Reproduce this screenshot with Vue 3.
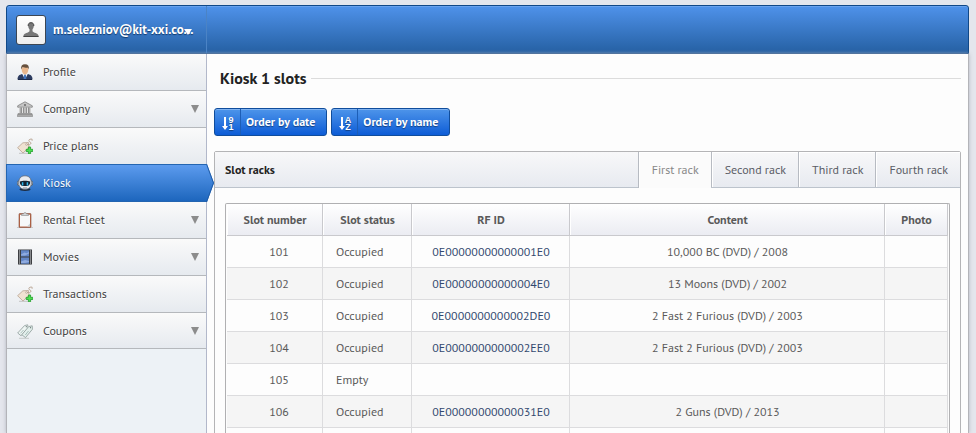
<script setup>
import { ref } from 'vue'

const menu = [
  { label: 'Profile', icon: 'person' },
  { label: 'Company', icon: 'bank', expandable: true },
  { label: 'Price plans', icon: 'tag' },
  { label: 'Kiosk', icon: 'robot', active: true },
  { label: 'Rental Fleet', icon: 'clipboard', expandable: true },
  { label: 'Movies', icon: 'film', expandable: true },
  { label: 'Transactions', icon: 'tag' },
  { label: 'Coupons', icon: 'coupons', expandable: true },
]

const orders = [
  { label: 'Order by date', top: '9', bottom: '1' },
  { label: 'Order by name', top: 'A', bottom: 'Z' },
]

const tabs = ['First rack', 'Second rack', 'Third rack', 'Fourth rack']
const current = ref(0)

const slots = [
  { number: '101', status: 'Occupied', rfid: '0E00000000000001E0', content: '10,000 BC (DVD) / 2008' },
  { number: '102', status: 'Occupied', rfid: '0E00000000000004E0', content: '13 Moons (DVD) / 2002' },
  { number: '103', status: 'Occupied', rfid: '0E0000000000002DE0', content: '2 Fast 2 Furious (DVD) / 2003' },
  { number: '104', status: 'Occupied', rfid: '0E0000000000002EE0', content: '2 Fast 2 Furious (DVD) / 2003' },
  { number: '105', status: 'Empty', rfid: '', content: '' },
  { number: '106', status: 'Occupied', rfid: '0E00000000000031E0', content: '2 Guns (DVD) / 2013' },
  { number: '', status: '', rfid: '', content: '' },
]
</script>

<template>
  <div class="page">
    <header class="topbar">
      <button class="user" type="button">
        <span class="avatar">
          <svg width="16" height="16" viewBox="0 0 16 16">
            <path d="M8 .5C6 .5 5 2 5.200 4c.1 1.500.7 2.600 1.300 3.300v2C5.500 10.800 1 11.300.5 13.500V15h15v-1.500c-.5-2.200-5-2.700-6-4.200v-2c.6-.7 1.200-1.800 1.300-3.300C11 2 10 .5 8 .5z" fill="#777" />
            <path d="M5.200 4C5 2 6 .7 8 .7s3 1.300 2.800 3.300M.5 14.500h15" fill="none" stroke="#444" />
          </svg>
        </span>
        <span class="email">m.selezniov@kit-xxi.co...</span>
        <svg class="user-caret" width="8" height="6" viewBox="0 0 8 6"><path d="M0 0h8L4 6z" fill="#fff" /></svg>
      </button>
    </header>

    <div class="body">
      <nav class="sidebar">
        <a v-for="item in menu" :key="item.label" href="#" class="item" :class="{ active: item.active }">
          <svg v-if="item.icon === 'person'" class="icon" viewBox="0 0 16 16">
            <path d="M.5 15.500c0-3.500 1.500-4.800 5-5.500h5c3.500.7 5 2 5 5.500z" fill="#2c3b60" />
            <path d="M5 9.500h6L8 15.500z" fill="#f2f5fa" />
            <path d="M7.200 10.500h1.600l.6 5H6.600z" fill="#3f73bd" />
            <path d="M4.600 4.500c0 4 1.800 6 3.400 6s3.400-2 3.400-6L9.500 2.800h-3z" fill="#e9b78d" />
            <path d="M4.200 5.500C3.700 2 5 .3 8 .3s4.300 1.700 3.800 5.200L11 3.700C9 4 7 3.300 5.800 3L5 4z" fill="#66503d" />
            <path d="M1 15.500h14" stroke="#1b2848" />
          </svg>
          <svg v-else-if="item.icon === 'bank'" class="icon" viewBox="0 0 16 16">
            <path d="M8 .8 15.300 4.800v1.400H.7V4.800z" fill="#c6c6c6" stroke="#808080" stroke-width=".8" />
            <circle cx="8" cy="4" r="1.100" fill="#6f6f6f" />
            <path d="M2 6.500h12v6H2z" fill="#868686" />
            <path d="M2.800 6.500v6M5.500 6.500v6M8 6.500v6M10.500 6.500v6M13.200 6.500v6" stroke="#e4e4e4" stroke-width="1.200" />
            <path d="M1 12.500h14v1.300H1zM.3 13.800h15.400v1.700H.3z" fill="#bfbfbf" stroke="#808080" stroke-width=".6" />
          </svg>
          <svg v-else-if="item.icon === 'tag'" class="icon" viewBox="0 0 16 16">
            <path d="M2 15.300h11" stroke="#c4c4c4" />
            <path d="M.6 9.700 5.900 4.800l5.500-.3.6 4.900-6 5.600z" fill="#f0e2d2" stroke="#b09a86" stroke-width=".7" />
            <circle cx="9.500" cy="6.500" r=".9" fill="#fff" stroke="#9b8374" stroke-width=".5" />
            <path d="M9.700 6.300c2 .9 4.300.2 4.300-1.200 0-1.200-2.300-1.100-2.200-2.400.1-1.500 2-1.900 3.300-1.500v1.600" fill="none" stroke="#b8a28f" stroke-width=".9" />
            <path d="M11.400 9h2.200v2.300h2.200v2.200h-2.200v2.300h-2.200v-2.300H9.200v-2.200h2.200z" fill="#4be04f" stroke="#1f9a2a" stroke-width=".8" />
          </svg>
          <svg v-else-if="item.icon === 'robot'" class="icon" viewBox="0 0 16 16">
            <ellipse cx="8" cy="14.500" rx="5.500" ry="1.400" fill="#1d2d42" />
            <rect x=".3" y="6" width="15.400" height="4.500" rx="1.500" fill="#c3c8d0" stroke="#43505f" stroke-width=".7" />
            <path d="M8 .8c4.300 0 6.300 2.800 6.300 7S12 14.300 8 14.300 1.700 12 1.700 7.800 3.700.8 8 .8z" fill="#e9ebef" stroke="#5d6673" stroke-width=".8" />
            <path d="M2.800 6.600C5 5.600 11 5.600 13.200 6.600c.1 2.800-1 4-2.700 4.400h-5C3.800 10.600 2.700 9.400 2.800 6.600z" fill="#152230" />
            <path d="M5.600 7.200v3.300M10.400 7.200v3.300" stroke="#2cb7ed" stroke-width="1.500" />
            <path d="M6 13h4" stroke="#818a96" />
          </svg>
          <svg v-else-if="item.icon === 'clipboard'" class="icon" viewBox="0 0 16 16">
            <path d="M0 15.500h16" stroke="#c7c8ca" />
            <rect x="2" y="1.500" width="12" height="14" rx=".8" fill="#b9694a" stroke="#8a4d38" stroke-width=".6" />
            <path d="M3 2.800h10v11.700H3z" fill="#f6f8f9" />
            <path d="m10 14.500 3-3v3z" fill="#c6d0d4" />
            <path d="M4.500 3.500V2h2C6.500.1 9.500.1 9.500 2h2v1.500z" fill="#d5d9db" stroke="#888" stroke-width=".6" />
          </svg>
          <svg v-else-if="item.icon === 'film'" class="icon" viewBox="0 0 16 16">
            <path d="M1 .5h14v15H1z" fill="#393b3e" />
            <path d="M4 1.200h8v6.300H4zM4 8.500h8v6.300H4z" fill="#6286c8" />
            <path d="M4 5.500 7.500 3.500l2 .8L12 3v1.500l-4 2H4zM4 12.500l4-1.500 4 1v1L8 14H4z" fill="#8fabdf" />
            <path d="M2.500 1.500v14M13.500 1.500v14" stroke="#d8dadc" stroke-width="1.100" stroke-dasharray="1 1" />
          </svg>
          <svg v-else class="icon" viewBox="0 0 16 16">
            <path d="M2 15.300h10" stroke="#c5cac9" />
            <path d="M.7 10 7.500 2.600l3.200-.8.4 3.200-7 7.800z" fill="#eef5f3" stroke="#8b9b98" stroke-width=".8" />
            <path d="M4.800 11.700 11.700 3.600l3.500-.8.200 3.500L8.500 14.600z" fill="#e3efec" stroke="#8b9b98" stroke-width=".8" />
            <circle cx="9.300" cy="3.700" r=".6" fill="#657471" />
            <circle cx="13.500" cy="4.700" r=".6" fill="#657471" />
            <path d="m3.500 10.300 3-3.300M8.300 12l3.200-4" stroke="#a6beb8" />
          </svg>
          <span class="label">{{ item.label }}</span>
          <svg v-if="item.expandable" class="caret" width="8" height="8" viewBox="0 0 8 8"><path d="M0 0h8L4 8z" fill="#8c8c8c" /></svg>
          <svg v-if="item.active" class="pointer" width="9" height="38" viewBox="0 0 9 38">
            <defs>
              <linearGradient id="pointerFill" x1="0" y1="0" x2="0" y2="1">
                <stop offset="0" stop-color="#5c9bee" />
                <stop offset="1" stop-color="#1d66bd" />
              </linearGradient>
            </defs>
            <path d="M0 0h1l7 19L1 38H0z" fill="url(#pointerFill)" />
            <path d="m.5 0 7 19L.5 38" fill="none" stroke="#1f5ba6" />
          </svg>
        </a>
      </nav>

      <main class="content">
        <h1 class="title">Kiosk 1 slots</h1>

        <div class="actions">
          <button v-for="order in orders" :key="order.label" class="btn" type="button">
            <span class="btn-icon">
              <svg width="14" height="20" viewBox="0 0 14 20" fill="#fff" aria-hidden="true">
                <path d="M2 4h2v9h2l-3 4-3-4h2z" />
                <text x="9" y="10" class="glyph">{{ order.top }}</text>
                <text x="9" y="17" class="glyph">{{ order.bottom }}</text>
              </svg>
            </span>
            <span class="btn-text">{{ order.label }}</span>
          </button>
        </div>

        <section class="panel">
          <div class="panel-head">
            <h2>Slot racks</h2>
            <div class="tabs" role="tablist">
              <button
                v-for="(tab, i) in tabs"
                :key="tab"
                type="button"
                role="tab"
                class="tab"
                :class="{ current: i === current }"
                :aria-selected="i === current"
                @click="current = i"
              >{{ tab }}</button>
            </div>
          </div>
          <div class="panel-body">
            <div class="frame">
              <table>
                <colgroup>
                  <col class="c-number" /><col class="c-status" /><col class="c-rfid" /><col /><col class="c-photo" />
                </colgroup>
                <thead>
                  <tr><th>Slot number</th><th>Slot status</th><th>RF ID</th><th>Content</th><th>Photo</th></tr>
                </thead>
                <tbody>
                  <tr v-for="slot in slots" :key="slot.number">
                    <td class="number">{{ slot.number }}</td>
                    <td class="status">{{ slot.status }}</td>
                    <td><a v-if="slot.rfid" href="#">{{ slot.rfid }}</a></td>
                    <td>{{ slot.content }}</td>
                    <td></td>
                  </tr>
                </tbody>
              </table>
            </div>
          </div>
        </section>
      </main>
    </div>
  </div>
</template>

<style>
body {
  margin: 0;
  background: #e4e6ed;
  overflow: hidden;
}
</style>

<style scoped>
* {
  box-sizing: border-box;
}

.page {
  display: flex;
  flex-direction: column;
  height: 100vh;
  padding: 5px 7px 0 6px;
  overflow: hidden;
  font: 12px/16px "PT Sans", "Noto Sans", sans-serif;
  color: #5a5a5a;
}

button {
  font: inherit;
  margin: 0;
  cursor: pointer;
}

a {
  text-decoration: none;
}

.topbar {
  flex: none;
  height: 49px;
  display: flex;
  border: 1px solid #104888;
  border-radius: 3px 3px 0 0;
  background: linear-gradient(#4f92ea, #2560a3);
  box-shadow: inset 0 1px #69a2ee;
}

.user {
  position: relative;
  width: 200px;
  display: flex;
  align-items: center;
  gap: 7px;
  padding: 0 0 0 9px;
  border: 0;
  border-right: 1px solid #4b83c5;
  background: none;
  color: #fff;
  font-size: 13px;
  font-weight: 700;
  text-shadow: 0 1px 1px #123a6c;
}

.avatar {
  flex: none;
  width: 30px;
  height: 30px;
  display: grid;
  place-items: center;
  border: 1px solid #3c4653;
  border-radius: 3px;
  background: linear-gradient(#fff, #eee);
}

.email {
  white-space: nowrap;
}

.user-caret {
  position: absolute;
  right: 14px;
  top: 23px;
}

.body {
  flex: 1;
  display: flex;
  min-height: 0;
  border: solid #b3b4b9;
  border-width: 0 1px;
  background: #fdfdfd;
  box-shadow: 0 0 4px #b4b6bf;
}

.sidebar {
  flex: none;
  width: 200px;
  border-right: 1px solid #b2b8ca;
  background: #edf2f6;
}

.item {
  position: relative;
  height: 37px;
  display: flex;
  align-items: center;
  gap: 10px;
  padding: 0 7px 0 10px;
  border-bottom: 1px solid #b5b8bc;
  background: linear-gradient(#fafafa, #e6eaef);
  color: #444;
  text-shadow: 0 1px #fff;
}

.item:last-child {
  height: 36px;
}

.item.active {
  height: 38px;
  margin: -1px 0 0 -1px;
  border: 1px solid #2465b1;
  border-right: 0;
  background: linear-gradient(#5c9bee, #1d66bd);
  color: #fff;
  text-shadow: 0 1px 1px #184a86;
}

.icon {
  flex: none;
  width: 16px;
  height: 16px;
}

.label {
  flex: 1;
}

.pointer {
  position: absolute;
  left: 100%;
  top: -1px;
}

.content {
  flex: 1;
  min-width: 0;
  padding: 15px 7px 0;
}

.title {
  display: flex;
  align-items: center;
  gap: 4px;
  margin: 0 0 21px;
  padding-left: 6px;
  font-size: 16px;
  line-height: 18px;
  color: #222;
}

.title::after {
  content: "";
  flex: 1;
  height: 1px;
  background: #dcdcdc;
}

.actions {
  display: flex;
  gap: 4px;
  margin-bottom: 15px;
}

.btn {
  height: 28px;
  display: flex;
  padding: 0;
  border: 1px solid #104d9c;
  border-radius: 3px;
  background: linear-gradient(#4e95ea, #0d5cd6);
  box-shadow: inset 0 1px #80b3f1;
  color: #fff;
  font-weight: 700;
  text-shadow: 0 1px 1px #123f80;
}

.btn-icon {
  width: 26px;
  height: 26px;
  display: grid;
  place-items: center;
  padding: 2px 0 0 3px;
  border-right: 1px solid #1d5eb6;
}

.glyph {
  font: 700 9px "Liberation Sans", sans-serif;
  text-anchor: middle;
}

.btn-text {
  padding: 0 11px 0 5px;
  line-height: 26px;
}

.panel {
  border: 1px solid #b4b4b6;
  border-radius: 2px 2px 0 0;
}

.panel-head {
  height: 36px;
  display: flex;
  justify-content: space-between;
  padding-left: 10px;
  border-bottom: 1px solid #bcc3cc;
  background: linear-gradient(#f8f8f9, #e7eaf0);
}

.panel-head h2 {
  margin: 0;
  font-size: 12px;
  line-height: 36px;
  color: #222;
}

.tabs {
  display: flex;
}

.tab {
  height: 35px;
  padding: 0 12px 0 13px;
  border: 0;
  border-left: 1px solid #b7bbc2;
  background: none;
  box-shadow: inset 1px 1px #fff;
  color: #5b5d66;
}

.tab.current {
  height: 36px;
  background: #fbfbfb;
  color: #888;
}

.panel-body {
  padding: 15px 10px 0;
}

.frame {
  padding: 0 1px;
  border: solid #b0b0b2;
  border-width: 1px 1px 0;
  border-radius: 2px 2px 0 0;
}

table {
  width: 100%;
  table-layout: fixed;
  border-collapse: separate;
  border-spacing: 0;
}

.c-number { width: 96px; }
.c-status { width: 89px; }
.c-rfid { width: 158px; }
.c-photo { width: 63px; }

th,
td {
  height: 32px;
  padding: 0 0 0 1px;
  border-right: 1px solid #dcdcde;
  border-bottom: 1px solid #dcdcde;
  text-align: center;
}

th {
  border-color: #c9c9cd;
  background: linear-gradient(#fff, #ebecf2);
  box-shadow: inset 1px 0 #fff;
}

td.number {
  padding-left: 9px;
}

td.status {
  padding-left: 13px;
  text-align: left;
}

tbody tr:nth-child(even) {
  background: #f5f5f5;
}

td a {
  color: #32496f;
}
</style>
